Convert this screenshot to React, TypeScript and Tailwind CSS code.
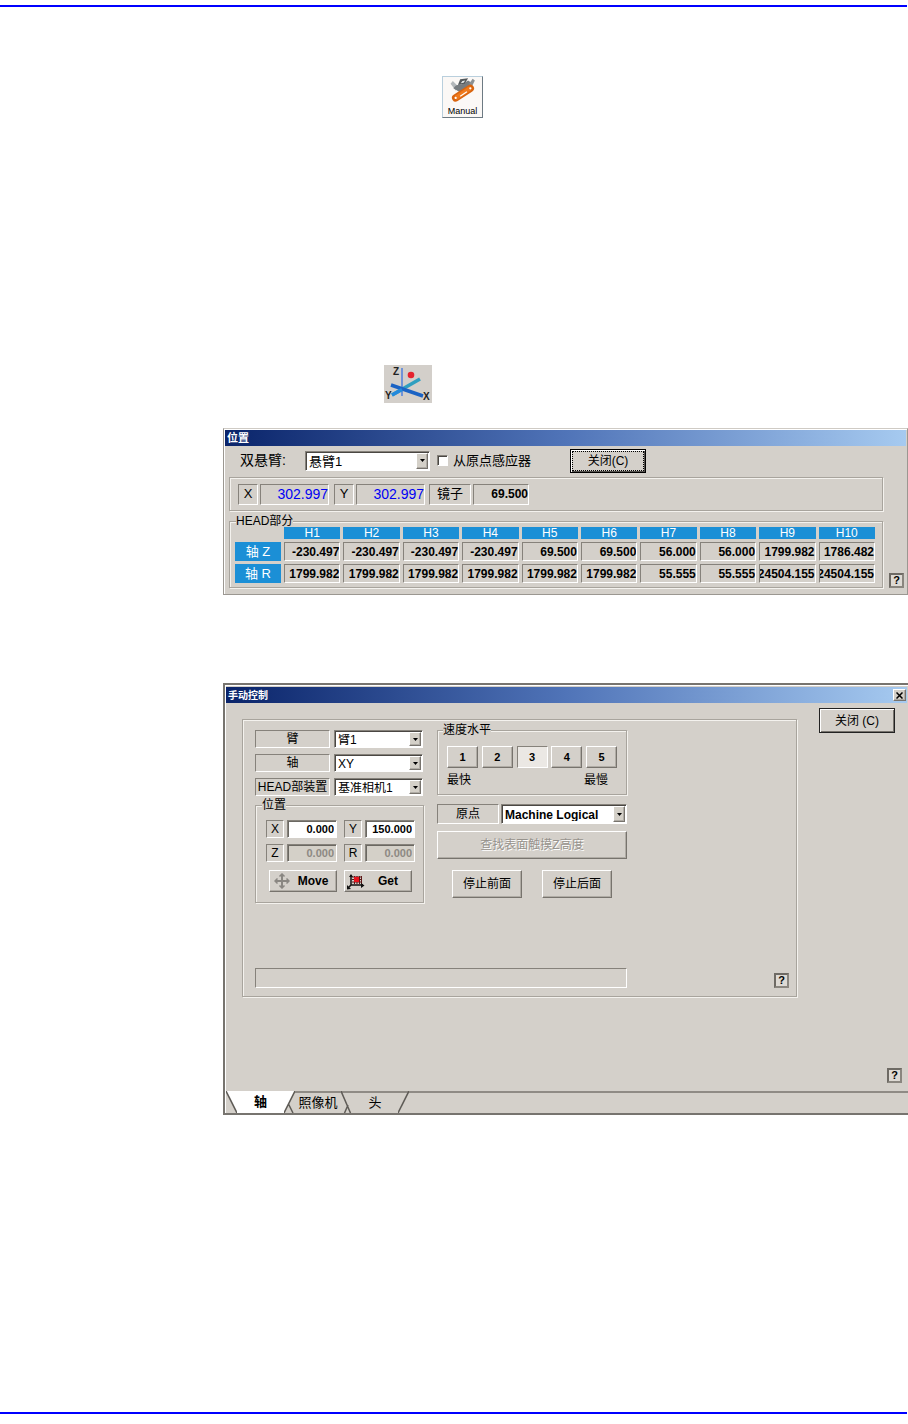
import { useState, type ReactNode } from "react";
import clsx from "clsx";

const RAISED =
  "border border-t-white border-l-white border-r-[#77736d] border-b-[#77736d] shadow-[inset_-1px_-1px_0_#b0aca5]";
const SUNKEN = "border border-t-[#86827b] border-l-[#86827b] border-r-white border-b-white";
const GROOVE = "border border-[#a8a49d] shadow-[1px_1px_0_#f4f2ee,inset_1px_1px_0_#f4f2ee]";

const HEADS = ["H1", "H2", "H3", "H4", "H5", "H6", "H7", "H8", "H9", "H10"];
const AXES = [
  {
    name: "轴 Z",
    values: ["-230.497", "-230.497", "-230.497", "-230.497", "69.500", "69.500", "56.000", "56.000", "1799.982", "1786.482"],
  },
  {
    name: "轴 R",
    values: ["1799.982", "1799.982", "1799.982", "1799.982", "1799.982", "1799.982", "55.555", "55.555", "24504.155", "24504.155"],
  },
];

function ManualIcon() {
  return (
    <svg viewBox="5 0 23 23" className="size-[26px]" aria-hidden="true">
      <path d="M10 12 L5.500 6 L7.500 3.500 L13 9 Z" fill="#b4b8bb" />
      <path d="M8 10 C11 5 15 8 18 5 L21 3 L24 5 L21 9 L13 13 Z" fill="#777c80" />
      <path d="M12 7 L14 2 L21 1 L18 6 Z" fill="#53585b" />
      <path d="M14.500 5.500 L16 3.500 L18.500 3 L17 5 Z" fill="#e4e8ea" />
      <path d="M22 6 L25 1.500 L27 3 L24 9 Z" fill="#8c9194" />
      <path d="M10 18.500 L23 10" stroke="#d9640f" strokeWidth="6.500" strokeLinecap="round" />
      <path d="M11 18 L22 10.500" stroke="#f07a1c" strokeWidth="4" strokeLinecap="round" />
      <path d="M14 17 L20 13" stroke="#fff" strokeWidth="1" />
      <circle cx="23" cy="10" r="1" fill="#fff" />
      <circle cx="10" cy="18.500" r="1" fill="#fff" />
    </svg>
  );
}

function AxisIcon() {
  return (
    <svg viewBox="0 0 48 38" className="h-[38px] w-12 bg-[#d3cfca]" role="img" aria-label="XYZ">
      <path d="M18 3 V31" stroke="#6f93d8" strokeWidth="2" />
      <path d="M8 30 L36 14" stroke="#2f9fc0" strokeWidth="3.500" />
      <path d="M7 20 L39 31" stroke="#1b63c4" strokeWidth="3.500" />
      <path d="M8 30 L18 24.500" stroke="#2389dc" strokeWidth="3.500" />
      <circle cx="27" cy="10" r="3.300" fill="#e5232d" />
      <g fontFamily="Liberation Sans, sans-serif" fontSize="10" fontWeight="700" fill="#222">
        <text x="9" y="10">Z</text>
        <text x="1" y="34">Y</text>
        <text x="39" y="35">X</text>
      </g>
    </svg>
  );
}

function MoveIcon() {
  return (
    <svg viewBox="0 0 16 16" className="size-4" fill="none" stroke="#8a8782" aria-hidden="true">
      <path d="M8 2 V14 M2 8 H14" strokeWidth="2" />
      <path d="M5.500 3.500 L8 1 L10.500 3.500 M5.500 12.500 L8 15 L10.500 12.500 M3.500 5.500 L1 8 L3.500 10.500 M12.500 5.500 L15 8 L12.500 10.500" strokeWidth="1.500" />
    </svg>
  );
}

function GetIcon() {
  return (
    <svg viewBox="0 0 18 17" className="h-[17px] w-[18px]" fill="none" aria-hidden="true">
      <path d="M5 4 H15 M5 6.500 H15 M5 9 H15 M7.500 3 V11 M10 3 V11 M12.500 3 V11 M14.500 3 V11" stroke="#5c1616" strokeWidth="1" />
      <rect x="7" y="4" width="5" height="5" fill="#e8141e" />
      <path d="M4 2 V12 H16 M4 12 L1 15" stroke="#111" strokeWidth="1.500" />
      <path d="M2 4 L4 1 L6 4 Z M14 10 L17.500 12.500 L14 15 Z M0 12 L0 16.500 L4 16 Z" fill="#111" />
    </svg>
  );
}

function TitleBar({ children, className }: { children: ReactNode; className?: string }) {
  return (
    <div
      className={clsx(
        "flex h-4 items-center justify-between bg-linear-to-r/srgb from-[#0a246a] via-[#5074b8] to-[#a6caf0] pr-px pl-0.5 font-bold text-white",
        className
      )}
    >
      {children}
    </div>
  );
}

function HelpButton() {
  return (
    <button
      type="button"
      aria-label="?"
      className="flex size-[15px] items-center justify-center border-2 border-[#6e6a64] border-r-[#8a867f] border-b-[#8a867f] bg-[#dedad4] text-[11px] leading-none font-bold"
    >
      ?
    </button>
  );
}

type ComboProps = { id: string; options: string[]; className?: string; bold?: boolean };

function Combo({ id, options, className, bold }: ComboProps) {
  return (
    <div className={clsx("relative bg-white", SUNKEN, className)}>
      <select
        id={id}
        className={clsx(
          "block h-full w-full appearance-none border-t border-l border-[#4a4743] bg-white pl-0.5 leading-none outline-none",
          bold && "font-bold"
        )}
      >
        {options.map((o) => (
          <option key={o}>{o}</option>
        ))}
      </select>
      <span
        className={clsx(
          "pointer-events-none absolute inset-y-px right-px flex w-3 items-center justify-center bg-[#d4d0c8]",
          RAISED
        )}
      >
        <svg viewBox="0 0 5 3" className="h-[3px] w-[5px]" aria-hidden="true">
          <path d="M0 0 H5 L2.500 3 Z" fill="#000" />
        </svg>
      </span>
    </div>
  );
}

function FieldLabel({ htmlFor, className, children }: { htmlFor: string; className?: string; children: ReactNode }) {
  return (
    <label htmlFor={htmlFor} className={clsx("flex items-center justify-center whitespace-nowrap", SUNKEN, className)}>
      {children}
    </label>
  );
}

function Coord({ name, value, disabled }: { name: string; value: string; disabled?: boolean }) {
  const id = `coord-${name}`;
  return (
    <div className="flex gap-[3px]">
      <FieldLabel htmlFor={id} className="h-[18px] w-[18px]">
        {name}
      </FieldLabel>
      <input
        id={id}
        defaultValue={value}
        disabled={disabled}
        className={clsx(
          "h-[18px] w-[50px] pr-0.5 text-right text-[11px] font-bold shadow-[inset_1px_1px_0_#6b6862] outline-none",
          SUNKEN,
          disabled ? "bg-[#d4d0c8] text-[#8d8983]" : "bg-white"
        )}
      />
    </div>
  );
}

function PositionDialog() {
  return (
    <section className="border border-[#9b9791] border-t-[#cfcbc5] bg-[#d4d0ca] pb-1.5 shadow-[inset_1px_1px_0_#fff]">
      <div className="px-px pt-px">
        <TitleBar className="text-[11px]">位置</TitleBar>
      </div>
      <div className="flex h-[31px] items-center pb-0.5 pl-4 text-[14px]">
        <label htmlFor="gantry" className="w-[65px]">
          双悬臂:
        </label>
        <Combo id="gantry" options={["悬臂1", "悬臂2"]} className="h-5 w-[125px] text-[13px]" />
        <label className="ml-[7px] flex items-center gap-[5px] text-[13px]">
          <input
            type="checkbox"
            className={clsx("size-[11px] appearance-none bg-white shadow-[inset_1px_1px_0_#4a4743] checked:bg-black", SUNKEN)}
          />
          从原点感应器
        </label>
        <button
          type="button"
          className="ml-[39px] h-6 w-[76px] border border-black p-px text-[12px] shadow-[inset_1px_1px_0_#fff,inset_-1px_-1px_0_#55524e]"
        >
          <span className="flex h-full items-center justify-center border border-dotted border-black">关闭(C)</span>
        </button>
      </div>

      <div className="flex pl-[5px]">
        <div className="min-w-0 flex-1">
          <div className={clsx("flex h-[34px] items-center pl-2 text-[14px]", GROOVE)}>
            <FieldLabel htmlFor="pos-x" className="h-[21px] w-5 text-[13px]">
              X
            </FieldLabel>
            <input id="pos-x" readOnly value="302.997" className={clsx("mr-[5px] ml-0.5 h-[21px] w-[69px] text-right text-[#0000f5] outline-none", SUNKEN)} />
            <FieldLabel htmlFor="pos-y" className="h-[21px] w-5 text-[13px]">
              Y
            </FieldLabel>
            <input id="pos-y" readOnly value="302.997" className={clsx("mr-1 ml-0.5 h-[21px] w-[69px] text-right text-[#0000f5] outline-none", SUNKEN)} />
            <FieldLabel htmlFor="mirror" className="h-[21px] w-[42px] text-[13px]">
              镜子
            </FieldLabel>
            <input id="mirror" readOnly value="69.500" className={clsx("ml-0.5 h-[21px] w-14 text-right text-[12px] font-bold outline-none", SUNKEN)} />
          </div>

          <fieldset className={clsx("mt-1 min-w-0 pr-1 pb-px pl-0.5", GROOVE)}>
            <legend className="ml-1 bg-[#d4d0ca] text-[12px] leading-3">HEAD部分</legend>
            <table className="-mt-[3px] w-full table-fixed border-separate border-spacing-[3px] text-[12px]">
              <thead>
                <tr className="h-3 text-white">
                  <td className="w-[46px] p-0" />
                  {HEADS.map((h) => (
                    <th key={h} scope="col" className="bg-[#1b8fd6] p-0 leading-3 font-medium">
                      {h}
                    </th>
                  ))}
                </tr>
              </thead>
              <tbody>
                {AXES.map((axis) => (
                  <tr key={axis.name}>
                    <th scope="row" className="bg-[#1b8fd6] p-0 text-[13px] leading-[18px] font-normal text-white">
                      {axis.name}
                    </th>
                    {axis.values.map((v, i) => (
                      <td key={i} className={clsx("p-0", SUNKEN)}>
                        <div className="flex h-[17px] items-center justify-end overflow-hidden font-bold">{v}</div>
                      </td>
                    ))}
                  </tr>
                ))}
              </tbody>
            </table>
          </fieldset>
        </div>
        <div className="flex w-6 items-end justify-end pr-[3px]">
          <HelpButton />
        </div>
      </div>
    </section>
  );
}

function SpeedLevel() {
  const [speed, setSpeed] = useState(3);
  return (
    <fieldset className={clsx("h-[72px] px-[9px]", GROOVE)}>
      <legend className="-ml-1 bg-[#d4d0ca] text-[12px] leading-[14px]">速度水平</legend>
      <div className="mt-[9px] flex justify-between">
        {[1, 2, 3, 4, 5].map((n) => (
          <button
            key={n}
            type="button"
            aria-pressed={speed === n}
            onClick={() => setSpeed(n)}
            className={clsx(
              "h-[22px] w-[31px] text-[11px] font-bold",
              speed === n ? ["bg-[#ebe8e4]", SUNKEN] : RAISED
            )}
          >
            {n}
          </button>
        ))}
      </div>
      <div className="mt-1 flex justify-between pr-[9px] leading-4">
        <span>最快</span>
        <span>最慢</span>
      </div>
    </fieldset>
  );
}

function TabBar() {
  const line = "#5f5c57";
  const edge = "#8f8b85";
  return (
    <nav className="flex h-[22px] text-[13px]">
      <svg viewBox="0 0 11 22" className="ml-px h-[22px] w-[11px]" aria-hidden="true">
        <path d="M0 0 H11 V22 Z" fill="#fff" />
        <path d="M0 0 L11 22" stroke={line} strokeWidth="1.500" />
      </svg>
      <button type="button" className="w-[47px] bg-white font-bold">
        轴
      </button>
      <svg viewBox="0 0 11 22" className="h-[22px] w-[11px]" aria-hidden="true">
        <path d="M0 0 H11 L0 22 Z" fill="#fff" />
        <path d="M11 0 L0 22 M4.500 13 L9 22" stroke={line} strokeWidth="1.500" />
      </svg>
      <button type="button" className="w-[46px] border-t-2 border-[#8f8b85] pb-1">
        照像机
      </button>
      <svg viewBox="0 0 11 22" className="h-[22px] w-[11px]" fill="none" aria-hidden="true">
        <path d="M0 1 H11" stroke={edge} strokeWidth="2" />
        <path d="M0 0 L9.500 22 M7 14 L3.500 22" stroke={line} strokeWidth="1.500" />
      </svg>
      <button type="button" className="w-[46px] border-t-2 border-[#8f8b85] pb-1">
        头
      </button>
      <svg viewBox="0 0 11 22" className="h-[22px] w-[11px]" fill="none" aria-hidden="true">
        <path d="M0 1 H11" stroke={edge} strokeWidth="2" />
        <path d="M11 0 L0 22" stroke={line} strokeWidth="1.500" />
      </svg>
      <div className="flex-1 border-t-2 border-[#8f8b85]" />
    </nav>
  );
}

function ManualDialog() {
  return (
    <section className="border-t-2 border-b-2 border-l-2 border-[#77746f] bg-[#d4d0ca] text-[12px] shadow-[inset_1px_1px_0_#fff]">
      <div className="pt-0.5 pr-px pl-px">
        <TitleBar className="text-[10px]">
          手动控制
          <button
            type="button"
            aria-label="关闭"
            className={clsx("flex h-3 w-[13px] items-center justify-center bg-[#d4d0c8]", RAISED)}
          >
            <svg viewBox="0 0 7 7" className="size-[7px]" aria-hidden="true">
              <path d="M0.500 0.500 L6.500 6.500 M6.500 0.500 L0.500 6.500" stroke="#000" strokeWidth="1.500" />
            </svg>
          </button>
        </TitleBar>
      </div>

      <div className="flex">
        <div className={clsx("mt-4 mb-[94px] ml-[17px] flex min-w-0 flex-1 justify-between pb-2 pl-3", GROOVE)}>
          <div className="w-[372px] pt-[3px]">
            <div className="flex justify-between">
              <div className="w-[169px] pt-[7px]">
                <div className="grid grid-cols-[75px_89px] gap-x-1 gap-y-1.5">
                  <FieldLabel htmlFor="arm" className="h-[18px]">臂</FieldLabel>
                  <Combo id="arm" options={["臂1", "臂2"]} className="h-[18px]" />
                  <FieldLabel htmlFor="axis" className="h-[18px]">轴</FieldLabel>
                  <Combo id="axis" options={["XY", "Z", "R"]} className="h-[18px]" />
                  <FieldLabel htmlFor="unit" className="h-[18px]">HEAD部装置</FieldLabel>
                  <Combo id="unit" options={["基准相机1", "基准相机2"]} className="h-[18px]" />
                </div>
                <fieldset className={clsx("mt-0.5 h-[105px] pr-2 pl-2.5", GROOVE)}>
                  <legend className="-ml-1 bg-[#d4d0ca] leading-[14px]">位置</legend>
                  <div className="mt-2 grid grid-cols-[71px_71px] gap-x-[7px] gap-y-1.5">
                    <Coord name="X" value="0.000" />
                    <Coord name="Y" value="150.000" />
                    <Coord name="Z" value="0.000" disabled />
                    <Coord name="R" value="0.000" disabled />
                  </div>
                  <div className="mt-2 ml-[3px] flex gap-[7px] font-bold">
                    <button type="button" className={clsx("flex h-[22px] w-[68px] items-center pl-1", RAISED)}>
                      <MoveIcon />
                      <span className="flex-1">Move</span>
                    </button>
                    <button type="button" className={clsx("flex h-[22px] w-[68px] items-center pl-0.5", RAISED)}>
                      <GetIcon />
                      <span className="flex-1">Get</span>
                    </button>
                  </div>
                </fieldset>
              </div>

              <div className="w-[190px]">
                <SpeedLevel />
                <div className="mt-[9px] flex justify-between">
                  <FieldLabel htmlFor="origin" className="h-5 w-[62px]">原点</FieldLabel>
                  <Combo id="origin" options={["Machine Logical", "Machine"]} className="h-5 w-[126px]" bold />
                </div>
                <button
                  type="button"
                  disabled
                  className={clsx("mt-[7px] h-7 w-full text-[#97938d] [text-shadow:1px_1px_0_#fff]", RAISED)}
                >
                  查找表面触摸Z高度
                </button>
                <div className="mt-[11px] flex justify-between px-[15px]">
                  <button type="button" className={clsx("h-7 w-[70px]", RAISED)}>停止前面</button>
                  <button type="button" className={clsx("h-7 w-[70px]", RAISED)}>停止后面</button>
                </div>
              </div>
            </div>
            <div className={clsx("mt-[65px] h-5", SUNKEN)} />
          </div>
          <div className="flex items-end pr-[7px]">
            <HelpButton />
          </div>
        </div>

        <div className="flex w-[111px] flex-col items-end justify-between pt-[5px] pb-2">
          <button
            type="button"
            className="mr-[13px] h-[25px] w-[76px] border border-[#222] shadow-[inset_1px_1px_0_#fff,inset_-1px_-1px_0_#77736d]"
          >
            关闭 (C)
          </button>
          <div className="mr-1.5">
            <HelpButton />
          </div>
        </div>
      </div>

      <TabBar />
    </section>
  );
}

export default function App() {
  return (
    <div className="flex min-h-screen flex-col bg-white pt-[5px] pb-2.5 font-['Liberation_Sans','Noto_Sans_CJK_SC',sans-serif] text-black">
      <div className="mr-px h-0.5 bg-[#0000ff]" />
      <main className="pl-[223px]">
        <button
          type="button"
          className="mt-[69px] ml-[219px] flex h-[42px] w-[41px] flex-col items-center border border-[#b9cfdd] border-r-[#6d7a83] border-b-[#6d7a83] bg-[#fbf8f6]"
        >
          <ManualIcon />
          <span className="mt-[3px] text-[9px] leading-[10px]">Manual</span>
        </button>
        <div className="mt-[247px] ml-[161px]">
          <AxisIcon />
        </div>
        <div className="mt-[25px]">
          <PositionDialog />
        </div>
        <div className="mt-[88px]">
          <ManualDialog />
        </div>
      </main>
      <div className="mt-auto mr-px h-0.5 bg-[#0000ff]" />
    </div>
  );
}
